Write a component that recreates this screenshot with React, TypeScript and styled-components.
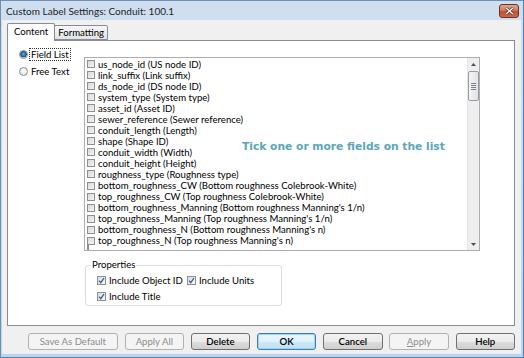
import styled, { createGlobalStyle } from "styled-components";

const GlobalStyle = createGlobalStyle`
  html, body {
    margin: 0;
    padding: 0;
    background: #ffffff;
  }
  body {
    font-family: "Lato", "Noto Sans", sans-serif;
  }
  * {
    box-sizing: border-box;
  }
`;

const Window = styled.div`
  width: 524px;
  height: 358px;
  display: flex;
  flex-direction: column;
  background: linear-gradient(#cfdff0, #bfd3e9);
  border: 1px solid #6f8fb4;
  border-right-color: #3f88c8;
  border-bottom-color: #3f88c8;
  padding: 0 2px 3px 1px;
  font-size: 9.6px;
  color: #000;
`;

const TitleBar = styled.div`
  height: 19px;
  display: flex;
  align-items: center;
  justify-content: space-between;
  padding: 0 2px 0 4px;
`;

const TitleText = styled.span`
  font-size: 10px;
  color: #1e1e1e;
`;

const CloseButton = styled.div`
  width: 20px;
  height: 14px;
  border: 1px solid #6b3326;
  border-radius: 3px;
  background: linear-gradient(#e2a58f 0%, #d2785c 45%, #c0502f 55%, #c86a48 100%);
  display: flex;
  align-items: center;
  justify-content: center;
`;

const Client = styled.div`
  flex: 1;
  background: #f0f0f0;
  display: flex;
  flex-direction: column;
  padding: 3px 6px 0 5px;
`;

const TabStrip = styled.div`
  height: 17px;
  display: flex;
  align-items: flex-end;
  position: relative;
  z-index: 1;
`;

const Tab = styled.div<{ $active?: boolean }>`
  height: ${(p) => (p.$active ? "18px" : "15px")};
  margin-bottom: ${(p) => (p.$active ? "-1px" : "0")};
  padding: ${(p) => (p.$active ? "2px 6px 0 6px" : "1px 3px 0 3px")};
  border: 1px solid #898c95;
  border-bottom: ${(p) => (p.$active ? "none" : "1px solid #898c95")};
  margin-left: ${(p) => (p.$active ? "0" : "-1px")};
  border-radius: 2px 2px 0 0;
  background: ${(p) =>
    p.$active ? "#ffffff" : "linear-gradient(#f6f6f6, #e3e3e3)"};
  white-space: nowrap;
`;

const Panel = styled.div`
  height: 286px;
  border: 1px solid #898c95;
  background: #ffffff;
  display: flex;
`;

const RadioColumn = styled.div`
  width: 76px;
  padding: 7px 0 0 11px;
  display: flex;
  flex-direction: column;
  gap: 5px;
`;

const RadioRow = styled.div`
  height: 12px;
  display: flex;
  align-items: center;
  gap: 2px;
`;

const Radio = styled.span<{ $on?: boolean }>`
  width: 9px;
  height: 9px;
  border-radius: 50%;
  border: 1px solid #8e8f8f;
  background: ${(p) =>
    p.$on
      ? "radial-gradient(circle at 50% 45%, #6fb4e4 0, #2a6fa8 2px, #1d4f7c 3px, #e9e9e9 3.6px, #f6f6f6 100%)"
      : "radial-gradient(circle at 50% 40%, #ffffff, #d8d8d8)"};
`;

const RadioLabel = styled.span<{ $focus?: boolean }>`
  padding: 0 1px;
  outline: ${(p) => (p.$focus ? "1px dotted #333" : "none")};
  line-height: 11px;
`;

const MainColumn = styled.div`
  padding-top: 16px;
  display: flex;
  flex-direction: column;
`;

const ListBox = styled.div`
  width: 396px;
  height: 194px;
  border: 1px solid #abadb3;
  display: flex;
  position: relative;
`;

const Items = styled.div`
  flex: 1;
  padding: 0.5px 0 0 2px;
  overflow: hidden;
`;

const ItemRow = styled.div`
  height: 11.05px;
  display: flex;
  align-items: center;
  gap: 3px;
  white-space: nowrap;
`;

const Box = styled.span`
  width: 8px;
  height: 8px;
  flex: none;
  border: 1px solid #8f8f8f;
  background: linear-gradient(135deg, #d9d9d9, #f4f4f4);
`;

const PeekBox = styled(Box)`
  margin-top: 5px;
`;

const Hint = styled.div`
  position: absolute;
  left: 157px;
  top: 82px;
  font-family: "DejaVu Sans", sans-serif;
  font-weight: bold;
  font-size: 10.7px;
  color: #5aa8b8;
  white-space: nowrap;
`;

const ScrollBar = styled.div`
  width: 12px;
  background: #efefef;
  border-left: 1px solid #e6e6e6;
  display: flex;
  flex-direction: column;
  align-items: center;
`;

const ArrowCell = styled.div`
  height: 12px;
  width: 100%;
  display: flex;
  align-items: center;
  justify-content: center;
`;

const Thumb = styled.div`
  width: 11px;
  height: 30px;
  margin-top: 1px;
  border: 1px solid #979ca3;
  border-radius: 2px;
  background: linear-gradient(90deg, #f5f5f5, #e2e2e2);
  display: flex;
  flex-direction: column;
  align-items: center;
  justify-content: center;
  gap: 1px;
`;

const Grip = styled.span`
  width: 5px;
  height: 1px;
  background: #7d8288;
`;

const Track = styled.div`
  flex: 1;
`;

const Group = styled.fieldset`
  margin: 8px 0 0 1px;
  width: 197px;
  height: 47px;
  border: 1px solid #d5dfe5;
  border-radius: 3px;
  padding: 3px 0 0 11px;
  min-width: 0;
`;

const Legend = styled.legend`
  padding: 0 1px;
  margin-left: -6px;
  font-size: 9.6px;
  line-height: 12px;
`;

const CheckGrid = styled.div`
  display: grid;
  grid-template-columns: 90px auto;
  row-gap: 4px;
`;

const CheckRow = styled.div`
  height: 12px;
  display: flex;
  align-items: center;
  gap: 3px;
`;

const CheckBox = styled.span`
  width: 9px;
  height: 9px;
  border: 1px solid #8f8f8f;
  background: linear-gradient(135deg, #dcdcdc, #f7f7f7);
  display: flex;
  align-items: center;
  justify-content: center;
`;

const ButtonRow = styled.div`
  margin-top: 7px;
  display: flex;
  justify-content: flex-end;
  gap: 6.7px;
`;

const Button = styled.div<{ $width?: number; $disabled?: boolean; $default?: boolean }>`
  width: ${(p) => p.$width ?? 59.5}px;
  height: 17px;
  border-radius: 3px;
  display: flex;
  align-items: center;
  justify-content: center;
  border: 1px solid
    ${(p) => (p.$disabled ? "#adb2b5" : p.$default ? "#3c7fb1" : "#707070")};
  background: ${(p) =>
    p.$disabled
      ? "#f4f4f4"
      : p.$default
      ? "linear-gradient(#eaf6fd 0%, #e0f1fb 50%, #cbe8f7 51%, #bfe0f2 100%)"
      : "linear-gradient(#f2f2f2 0%, #ebebeb 50%, #dddddd 51%, #cfcfcf 100%)"};
  color: ${(p) => (p.$disabled ? "#8d8d8d" : "#000")};
  font-weight: ${(p) => (p.$disabled ? "normal" : 600)};
  box-shadow: ${(p) => (p.$default ? "inset 0 0 0 1px #9fd5f3" : "none")};
`;

const fields = [
  "us_node_id (US node ID)",
  "link_suffix (Link suffix)",
  "ds_node_id (DS node ID)",
  "system_type (System type)",
  "asset_id (Asset ID)",
  "sewer_reference (Sewer reference)",
  "conduit_length (Length)",
  "shape (Shape ID)",
  "conduit_width (Width)",
  "conduit_height (Height)",
  "roughness_type (Roughness type)",
  "bottom_roughness_CW (Bottom roughness Colebrook-White)",
  "top_roughness_CW (Top roughness Colebrook-White)",
  "bottom_roughness_Manning (Bottom roughness Manning's 1/n)",
  "top_roughness_Manning (Top roughness Manning's 1/n)",
  "bottom_roughness_N (Bottom roughness Manning's n)",
  "top_roughness_N (Top roughness Manning's n)",
];

function Tick() {
  return (
    <svg width="7" height="7" viewBox="0 0 7 7">
      <path d="M1 3.6 L2.8 5.6 L6 1" fill="none" stroke="#2f5f9e" strokeWidth="1.3" />
    </svg>
  );
}

function Arrow({ up }: { up?: boolean }) {
  return (
    <svg width="5" height="3" viewBox="0 0 5 3">
      <path d={up ? "M0 3 L2.5 0 L5 3 Z" : "M0 0 L2.5 3 L5 0 Z"} fill="#4d4d4d" />
    </svg>
  );
}

export default function App() {
  return (
    <>
      <GlobalStyle />
      <Window>
        <TitleBar>
          <TitleText>Custom Label Settings: Conduit: 100.1</TitleText>
          <CloseButton>
            <svg width="9" height="8" viewBox="0 0 9 8">
              <path d="M1 1 L8 7 M8 1 L1 7" stroke="#5a2418" strokeWidth="2.6" />
              <path d="M1 1 L8 7 M8 1 L1 7" stroke="#ffffff" strokeWidth="1.4" />
            </svg>
          </CloseButton>
        </TitleBar>
        <Client>
          <TabStrip>
            <Tab $active>Content</Tab>
            <Tab>Formatting</Tab>
          </TabStrip>
          <Panel>
            <RadioColumn>
              <RadioRow>
                <Radio $on />
                <RadioLabel $focus>Field List</RadioLabel>
              </RadioRow>
              <RadioRow>
                <Radio />
                <RadioLabel>Free Text</RadioLabel>
              </RadioRow>
            </RadioColumn>
            <MainColumn>
              <ListBox>
                <Items>
                  {fields.map((f) => (
                    <ItemRow key={f}>
                      <Box />
                      <span>{f}</span>
                    </ItemRow>
                  ))}
                  <PeekBox />
                </Items>
                <ScrollBar>
                  <ArrowCell>
                    <Arrow up />
                  </ArrowCell>
                  <Thumb>
                    <Grip />
                    <Grip />
                    <Grip />
                    <Grip />
                  </Thumb>
                  <Track />
                  <ArrowCell>
                    <Arrow />
                  </ArrowCell>
                </ScrollBar>
                <Hint>Tick one or more fields on the list</Hint>
              </ListBox>
              <Group>
                <Legend>Properties</Legend>
                <CheckGrid>
                  <CheckRow>
                    <CheckBox>
                      <Tick />
                    </CheckBox>
                    <span>Include Object ID</span>
                  </CheckRow>
                  <CheckRow>
                    <CheckBox>
                      <Tick />
                    </CheckBox>
                    <span>Include Units</span>
                  </CheckRow>
                  <CheckRow>
                    <CheckBox>
                      <Tick />
                    </CheckBox>
                    <span>Include Title</span>
                  </CheckRow>
                </CheckGrid>
              </Group>
            </MainColumn>
          </Panel>
          <ButtonRow>
            <Button $width={90} $disabled>
              Save As Default
            </Button>
            <Button $disabled>Apply All</Button>
            <Button>Delete</Button>
            <Button $default>OK</Button>
            <Button>Cancel</Button>
            <Button $disabled>
              <u>A</u>pply
            </Button>
            <Button>Help</Button>
          </ButtonRow>
        </Client>
      </Window>
    </>
  );
}
